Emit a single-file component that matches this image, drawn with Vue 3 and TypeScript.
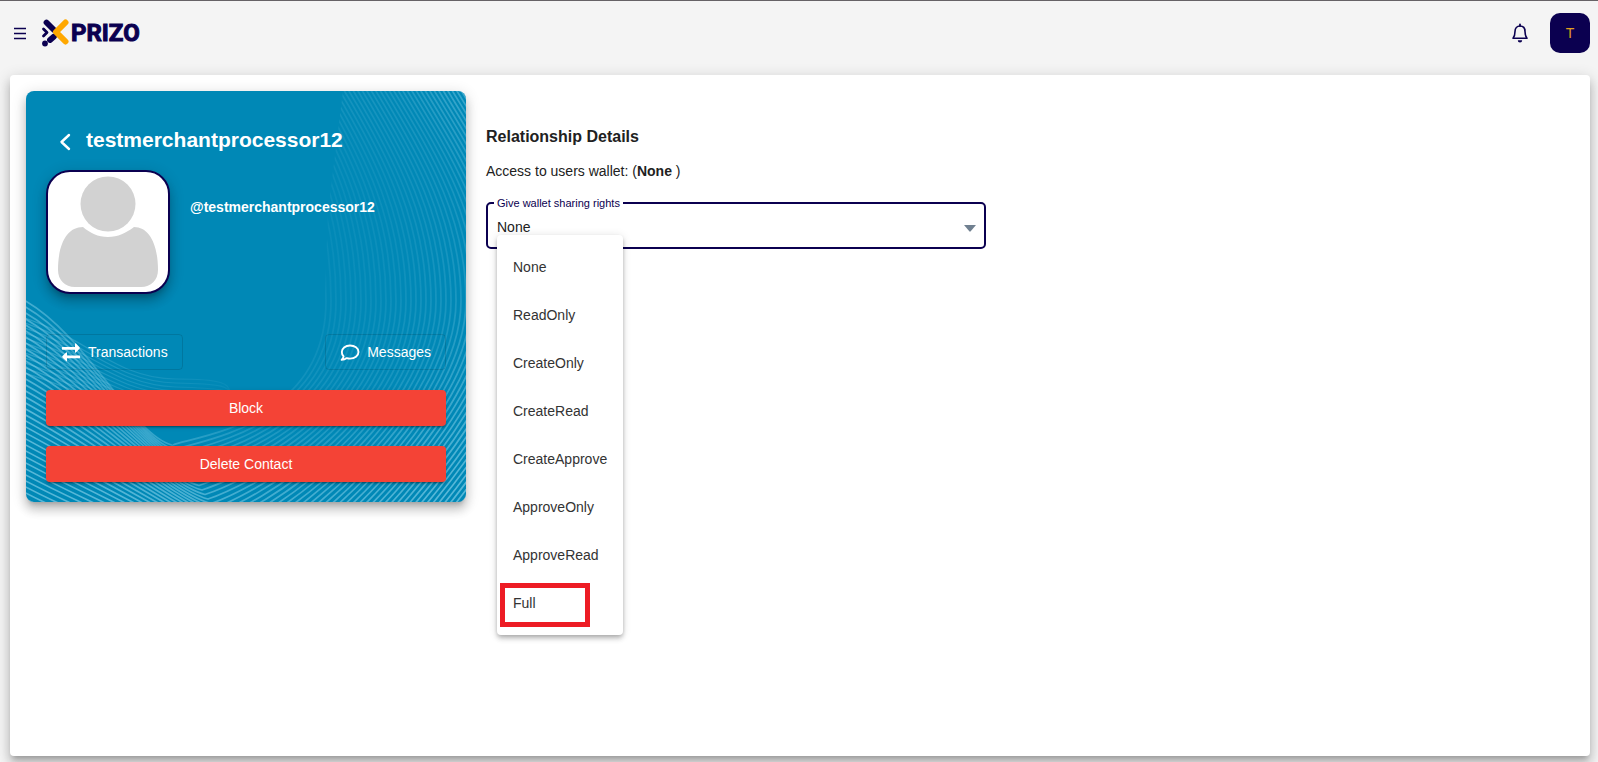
<script setup lang="ts">
import { ref } from 'vue'

const rights = ['None', 'ReadOnly', 'CreateOnly', 'CreateRead', 'CreateApprove', 'ApproveOnly', 'ApproveRead', 'Full']
const selected = ref('None')
const highlighted = 'Full'

const waves: string[] = Array.from({ length: 60 }, (_, i) => {
  const left = 208 + 6 * i
  const tx = 146 + 3 * i
  const ty = 354 + 4.5 * i
  const mx = 300 + 5 * i
  const top = 235 + 4.5 * i
  return `M-4 ${left} C60 ${left + 34} ${tx - 40} ${ty - 10} ${tx} ${ty} C${tx + 30} ${ty - 10} ${mx} 330 ${mx} 210 C${mx} 130 ${top + 45} 70 ${top} -4`
})

const ripples: string[] = Array.from({ length: 12 }, (_, i) => {
  const y = 226 + 5 * i
  return `M-4 ${y} C60 ${y + 20} 90 ${288 + 3 * i} 150 ${288 + 4 * i} S200 ${296 + 2 * i} 206 ${304 + i}`
})
</script>

<template>
  <div class="page">
    <header class="topbar">
      <button class="icon-btn menu-btn" aria-label="Open menu">
        <svg width="14" height="14" viewBox="0 0 14 14"><path d="M1 2.500h12M1 7.500h12M1 12.500h12" stroke="#0b0050" stroke-width="1.600" /></svg>
      </button>
      <a href="#" class="brand">
        <svg width="28" height="28" viewBox="0 0 28 28" fill="none" stroke-linecap="round" stroke-linejoin="round">
          <path d="M5.500 3.500 13 11M13 17.500 9 21" stroke="#0b0050" stroke-width="5.800" />
          <path d="M2.500 10 6 13.500 2.500 17" stroke="#0b0050" stroke-width="2.800" />
          <circle cx="4" cy="24.500" r="2.900" fill="#0b0050" />
          <path d="M24.500 3.500 15 13 24.500 22.500" stroke="#ffa800" stroke-width="6" />
        </svg>
        <span class="brand-name">PRIZO</span>
      </a>
      <span class="spacer"></span>
      <button class="icon-btn bell" aria-label="Notifications">
        <svg width="18" height="20" viewBox="0 0 18 20" fill="none">
          <path d="M2 15.200C3.700 13.300 4 11.700 4 8.500C4 5.200 6 3 9 3S14 5.200 14 8.500C14 11.700 14.300 13.300 16 15.200Z" stroke="#0b0050" stroke-width="1.600" stroke-linejoin="round" />
          <path d="M9 1.500V3" stroke="#0b0050" stroke-width="1.800" stroke-linecap="round" />
          <path d="M6.800 17.200H11.200A2.200 2.200 0 0 1 6.800 17.200Z" fill="#0b0050" />
        </svg>
      </button>
      <button class="account" aria-label="Account">T</button>
    </header>

    <main class="panel">
      <section class="profile">
        <svg class="waves" viewBox="0 0 440 411" preserveAspectRatio="none" aria-hidden="true">
          <defs>
            <radialGradient id="waveFade" gradientUnits="userSpaceOnUse" cx="250" cy="150" r="300">
              <stop offset="0" stop-color="#8fd6ee" stop-opacity="0.04" />
              <stop offset="0.4" stop-color="#8fd6ee" stop-opacity="0.1" />
              <stop offset="0.62" stop-color="#8fd6ee" stop-opacity="0.18" />
              <stop offset="0.8" stop-color="#8fd6ee" stop-opacity="0.42" />
              <stop offset="1" stop-color="#8fd6ee" stop-opacity="0.6" />
            </radialGradient>
            <linearGradient id="rippleFade" gradientUnits="userSpaceOnUse" x1="0" y1="0" x2="206" y2="0">
              <stop offset="0" stop-color="#8fd6ee" stop-opacity="0.3" />
              <stop offset="1" stop-color="#8fd6ee" stop-opacity="0.06" />
            </linearGradient>
            <clipPath id="waveArea"><path d="M0 207 60 238 130 290 146 354 164 336 200 310 274 286 299 202 302 120 317 0H440V411H0Z" /></clipPath>
          </defs>
          <g clip-path="url(#waveArea)">
            <path v-for="(d, i) in waves" :key="i" :d="d" fill="none" stroke="url(#waveFade)" stroke-width="1.700" />
          </g>
          <path v-for="(d, i) in ripples" :key="'r' + i" :d="d" fill="none" stroke="url(#rippleFade)" stroke-width="1.200" />
        </svg>
        <div class="title-row">
          <button class="icon-btn back" aria-label="Back">
            <svg width="12" height="18" viewBox="0 0 12 18"><path d="M10 2 2.500 9 10 16" fill="none" stroke="#fff" stroke-width="2.400" stroke-linecap="round" stroke-linejoin="round" /></svg>
          </button>
          <h1>testmerchantprocessor12</h1>
        </div>
        <div class="identity">
          <div class="avatar">
            <svg width="120" height="120" viewBox="0 0 120 120" fill="#d2d2d2" role="img" aria-label="User picture">
              <circle cx="60" cy="32" r="27.500" />
              <path d="M35 55C42 61 50 65 60 65S78 61 86 55C101 55 110 72 110 98C110 108 103 115 93 115H27C17 115 10 108 10 98C10 72 19 55 35 55Z" />
            </svg>
          </div>
          <strong class="handle">@testmerchantprocessor12</strong>
        </div>
        <div class="links">
          <button class="outline">
            <svg width="20" height="20" viewBox="0 0 20 20" fill="#fff">
              <path d="M1.500 5H14V1.800Q14 .8 14.900 1.500L18.500 5.200Q19.200 6 18.500 6.800L14.900 10.400Q14 11 14 10V7.800H1.500Q.8 7.800 .8 6.400T1.500 5Z" />
              <path d="M18.500 13.500H6V10.900Q6 9.900 5.100 10.600L1.500 14Q.8 14.800 1.500 15.600L5.100 19.100Q6 19.800 6 18.800V16.300H18.500Q19.200 16.300 19.200 14.900T18.500 13.500Z" />
            </svg>
            Transactions
          </button>
          <button class="outline">
            <svg width="20" height="20" viewBox="0 0 20 20" fill="none">
              <path d="M10 3.500C5.300 3.500 1.800 6.400 1.800 10C1.800 11.800 2.500 13.200 3.600 14.400C3.400 15.700 2.700 16.800 1.600 17.900C3.700 17.900 5.500 17.100 6.800 16.100C7.800 16.400 8.900 16.600 10 16.600C14.700 16.600 18.500 13.700 18.500 10S14.700 3.500 10 3.500Z" stroke="#fff" stroke-width="1.900" stroke-linejoin="round" />
            </svg>
            Messages
          </button>
        </div>
        <button class="danger">Block</button>
        <button class="danger">Delete Contact</button>
      </section>

      <section class="details">
        <h2>Relationship Details</h2>
        <p>Access to users wallet: (<b>None</b> )</p>
        <div class="field">
          <label for="rights">Give wallet sharing rights</label>
          <select id="rights" v-model="selected">
            <option v-for="r in rights" :key="r">{{ r }}</option>
          </select>
          <svg class="arrow" width="12" height="7" viewBox="0 0 12 7"><path d="M0 0H12L6.700 6.300Q6 7 5.300 6.300Z" fill="#708090" /></svg>
          <ul class="menu">
            <li v-for="r in rights" :key="r">
              <button @click="selected = r">{{ r }}</button>
              <span v-if="r === highlighted" class="marker"></span>
            </li>
          </ul>
        </div>
      </section>
    </main>
  </div>
</template>

<style>
body {
  margin: 0;
  background: #f4f4f4;
}
</style>

<style scoped>
* {
  box-sizing: border-box;
}
.page {
  min-height: 100vh;
  display: flex;
  flex-direction: column;
  padding: 0 8px 6px 10px;
  border-top: 1px solid #666266;
  background: #f4f4f4;
  color: #212121;
  font-family: "Liberation Sans", Arial, sans-serif;
  font-size: 14px;
}
button {
  font: inherit;
  cursor: pointer;
}
.topbar {
  height: 64px;
  margin-bottom: 10px;
  display: flex;
  align-items: center;
}
.icon-btn {
  display: flex;
  padding: 0;
  border: 0;
  background: none;
}
.menu-btn {
  margin-left: 3px;
}
.brand {
  display: flex;
  align-items: center;
  gap: 2px;
  margin-left: 14px;
  color: #0b0050;
  text-decoration: none;
}
.brand-name {
  font: 700 24px/28px Roboto, sans-serif;
  -webkit-text-stroke: 1px #0b0050;
  stroke-linejoin: round;
}
.spacer {
  flex: 1;
}
.bell {
  margin-right: 21px;
}
.account {
  width: 40px;
  height: 40px;
  border: 0;
  border-radius: 10px;
  background: #0b0050;
  color: #e0a020;
}
.panel {
  flex: 1;
  display: flex;
  align-items: flex-start;
  gap: 20px;
  padding: 16px;
  border-radius: 4px;
  background: #fff;
  box-shadow: 0 5px 5px -3px rgba(0, 0, 0, 0.2), 0 8px 10px 1px rgba(0, 0, 0, 0.14), 0 3px 14px 2px rgba(0, 0, 0, 0.12);
}
.profile {
  position: relative;
  flex: 0 1 440px;
  display: flex;
  flex-direction: column;
  gap: 20px;
  padding: 35px 20px 20px;
  border-radius: 8px;
  background: #0088b6;
  color: #fff;
  box-shadow: 0 5px 5px -3px rgba(0, 0, 0, 0.2), 0 8px 10px 1px rgba(0, 0, 0, 0.14), 0 3px 14px 2px rgba(0, 0, 0, 0.12);
}
.profile > * {
  position: relative;
}
.profile > .waves {
  position: absolute;
  inset: 0;
  width: 100%;
  height: 100%;
  border-radius: 8px;
}
.title-row {
  display: flex;
  align-items: center;
  gap: 15px;
  height: 28px;
  padding-left: 13px;
  margin-bottom: -4px;
}
.back {
  padding-top: 4px;
}
h1 {
  margin: 0;
  font-size: 21px;
  line-height: 28px;
}
.identity {
  display: flex;
  gap: 20px;
  margin-bottom: 20px;
}
.avatar {
  display: flex;
  overflow: hidden;
  border: 2px solid #0b0050;
  border-radius: 24px;
  background: #fff;
  box-shadow: 0 5px 5px -3px rgba(0, 0, 0, 0.2), 0 8px 10px 1px rgba(0, 0, 0, 0.14), 0 3px 14px 2px rgba(0, 0, 0, 0.12);
}
.handle {
  margin-top: 28px;
  line-height: 18px;
}
.links {
  display: flex;
  justify-content: space-between;
}
.outline {
  display: flex;
  align-items: center;
  gap: 7px;
  height: 36px;
  padding: 0 14px;
  border: 1px solid rgba(0, 0, 0, 0.12);
  border-radius: 4px;
  background: none;
  color: #fff;
}
.danger {
  height: 36px;
  border: 0;
  border-radius: 4px;
  background: #f44336;
  color: #fff;
  box-shadow: 0 3px 1px -2px rgba(0, 0, 0, 0.2), 0 2px 2px 0 rgba(0, 0, 0, 0.14), 0 1px 5px 0 rgba(0, 0, 0, 0.12);
}
.details {
  flex: 1;
}
h2 {
  margin: 34px 0 12px;
  font-size: 16px;
  line-height: 24px;
}
p {
  margin: 0 0 21px;
  line-height: 20px;
}
.field {
  position: relative;
  max-width: 500px;
}
.field label {
  position: absolute;
  top: -6px;
  left: 8px;
  padding: 0 3px;
  background: #fff;
  color: #0b0050;
  font-size: 11px;
  line-height: 14px;
}
.field select {
  display: block;
  width: 100%;
  height: 47px;
  padding: 2px 9px 0;
  border: 2px solid #0b0050;
  border-radius: 5px;
  outline: none;
  appearance: none;
  background: #fff;
  color: #212121;
  font: inherit;
}
.arrow {
  position: absolute;
  top: 23px;
  right: 10px;
  pointer-events: none;
}
.menu {
  position: absolute;
  top: 33px;
  left: 11px;
  margin: 0;
  padding: 8px 0;
  border-radius: 4px;
  background: #fff;
  list-style: none;
  box-shadow: 0 2px 4px -1px rgba(0, 0, 0, 0.2), 0 4px 5px 0 rgba(0, 0, 0, 0.14), 0 1px 10px 0 rgba(0, 0, 0, 0.12);
}
.menu li {
  position: relative;
}
.menu button {
  display: block;
  width: 100%;
  height: 48px;
  padding: 0 16px;
  border: 0;
  background: none;
  color: #333;
  text-align: left;
}
.marker {
  position: absolute;
  inset: 4px 33px 0 3px;
  border: 5px solid #ed1c24;
}
</style>
